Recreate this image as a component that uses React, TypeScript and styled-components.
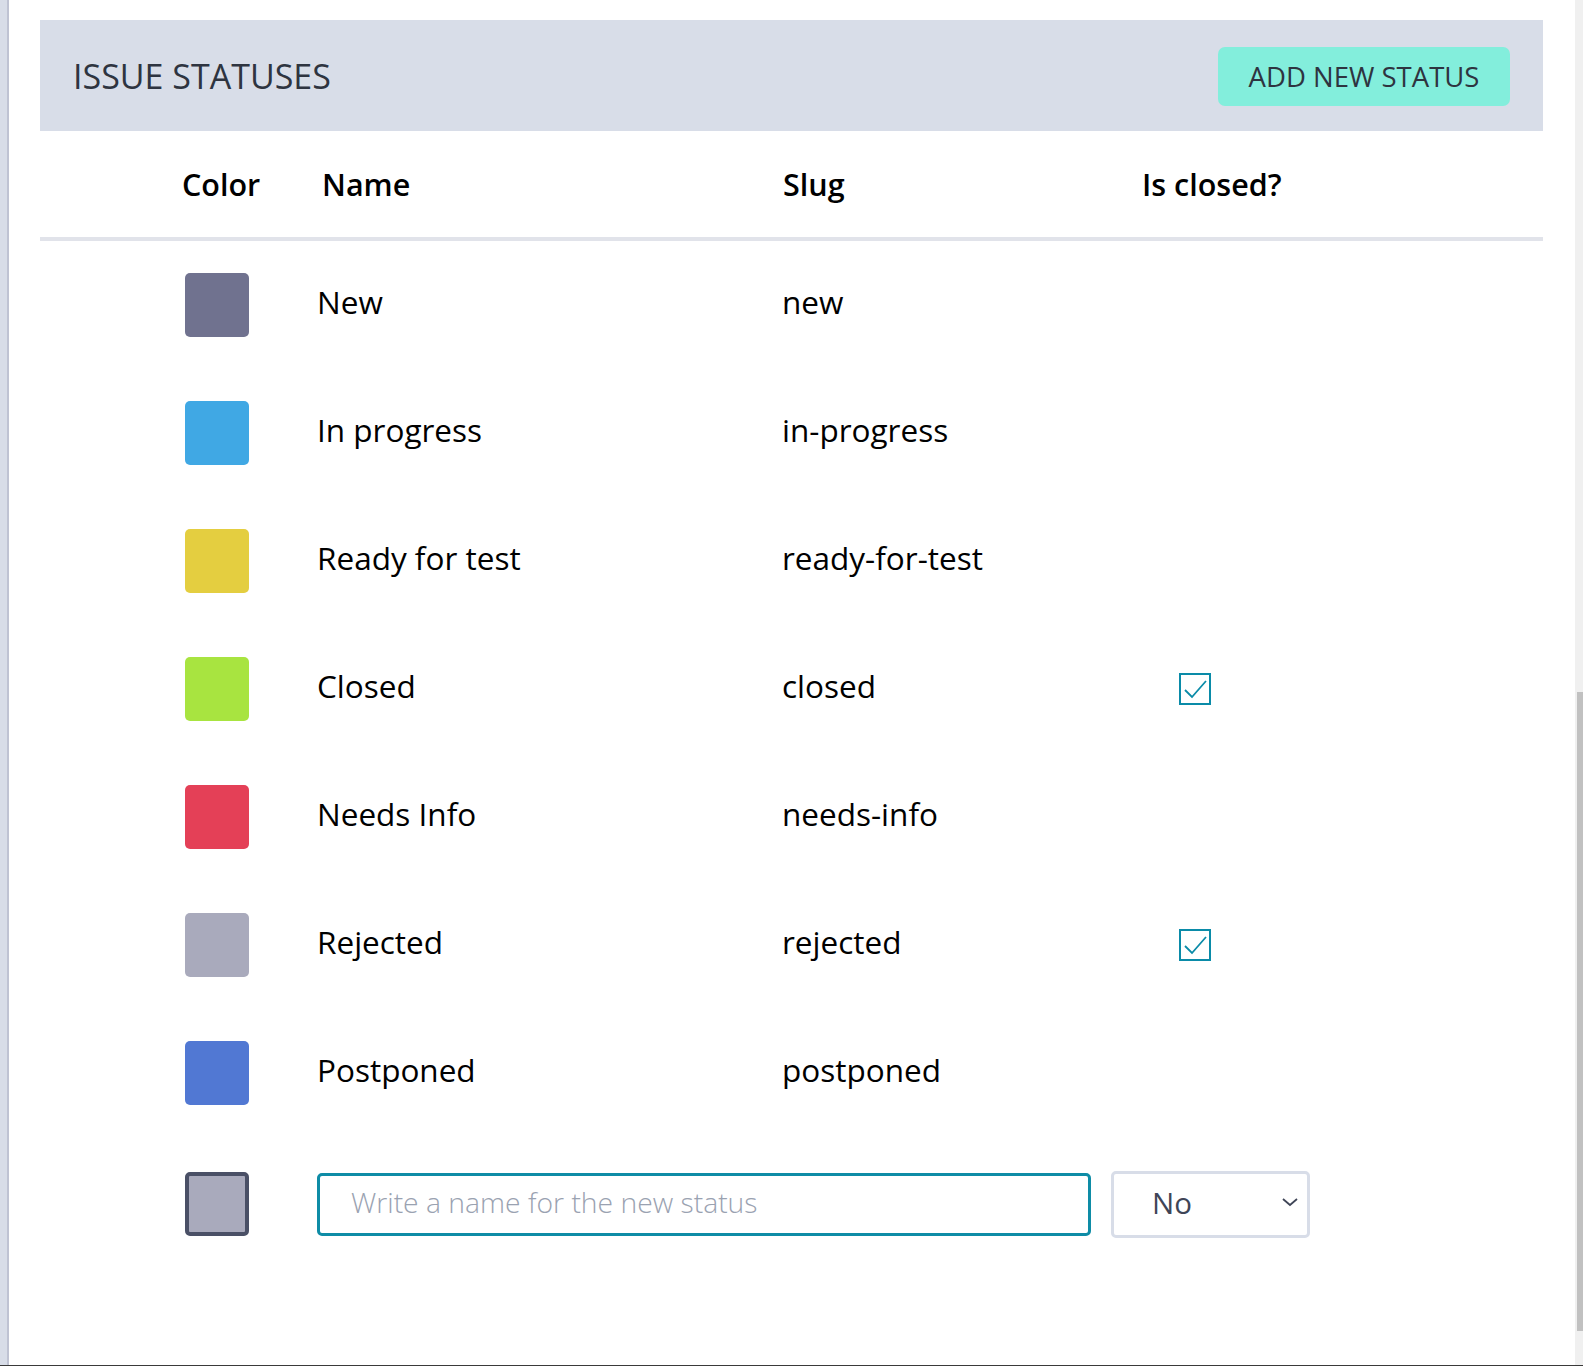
import React from "react";
import styled, { createGlobalStyle } from "styled-components";

const GlobalStyle = createGlobalStyle`
  html, body {
    margin: 0;
    padding: 0;
    background: #ffffff;
    overflow: hidden;
  }
  * { box-sizing: border-box; }
`;

const FONT = `"Open Sans", "Noto Sans", "DejaVu Sans", sans-serif`;

const Page = styled.div`
  display: flex;
  height: 1366px;
  border-bottom: 1px solid #3a3a3a;
  font-family: ${FONT};
  background: #ffffff;
`;

const LeftRail = styled.div`
  width: 9px;
  flex-shrink: 0;
  background: #d8dde8;
  border-right: 2px solid #bfc3d3;
`;

const Main = styled.main`
  flex: 1;
  padding: 20px 32px 0 31px;
  display: flex;
  flex-direction: column;
`;

const ScrollTrack = styled.div`
  width: 8px;
  flex-shrink: 0;
  background: #f0f0f0;
  padding: 692px 0 34px 2px;
  display: flex;
`;

const ScrollThumb = styled.div`
  flex: 1;
  background: #c1c1c1;
`;

const HeaderBand = styled.header`
  height: 111px;
  background: #d8dde8;
  display: flex;
  align-items: center;
  justify-content: space-between;
  padding: 0 33px 0 33px;
`;

const Title = styled.h1`
  margin: 0;
  font-size: 34px;
  font-weight: 400;
  color: #2e3440;
  letter-spacing: 0;
`;

const AddButton = styled.button`
  width: 292px;
  height: 59px;
  margin-top: 1px;
  border: none;
  border-radius: 7px;
  background: #83eedc;
  color: #2e3440;
  font-family: ${FONT};
  font-size: 27.5px;
  font-weight: 400;
  letter-spacing: 0;
  padding: 0;
  cursor: pointer;
`;

const Table = styled.div`
  display: flex;
  flex-direction: column;
`;

const GRID = `132px 465px 359px 1fr`;

const HeadRow = styled.div`
  display: grid;
  grid-template-columns: 140px 461px 359px 1fr;
  align-items: center;
  height: 110px;
  padding-left: 142px;
  border-bottom: 4px solid #e1e3ea;
`;

const HeadCell = styled.div`
  font-size: 30.5px;
  font-weight: 600;
  color: #000000;
  letter-spacing: 0;
`;

const Row = styled.div`
  display: grid;
  grid-template-columns: ${GRID};
  align-items: center;
  height: 128px;
  padding-left: 145px;
`;

const Swatch = styled.div<{ $color: string; $outlined?: boolean }>`
  width: 64px;
  height: 64px;
  border-radius: 5px;
  background: ${(p) => p.$color};
  border: ${(p) => (p.$outlined ? "4px solid #4a5066" : "none")};
`;

const Cell = styled.div`
  font-size: 31.5px;
  font-weight: 400;
  color: #000000;
  letter-spacing: 0;
  padding-bottom: 7px;
`;

const CheckCell = styled.div`
  padding-left: 38px;
  display: flex;
`;

const CheckBox = styled.div`
  width: 32px;
  height: 32px;
  border: 2px solid #0a8ba8;
  display: flex;
  align-items: center;
  justify-content: center;
`;

const FormRow = styled.div`
  display: flex;
  align-items: center;
  height: 132px;
  margin-top: 1px;
  padding-left: 145px;
`;

const NameInput = styled.input`
  margin-left: 68px;
  width: 774px;
  height: 63px;
  border: 3px solid #0e8ca6;
  border-radius: 5px;
  padding: 0 0 4px 31px;
  font-family: ${FONT};
  font-size: 28.3px;
  font-weight: 300;
  color: #2e3440;
  outline: none;
  caret-color: #3f4557;
  &::placeholder {
    color: #9aa2b1;
    opacity: 1;
  }
`;

const SelectBox = styled.div`
  margin-left: 20px;
  width: 199px;
  height: 67px;
  border: 3px solid #d8dde8;
  border-radius: 5px;
  display: flex;
  align-items: center;
  justify-content: space-between;
  padding: 0 8px 4px 38px;
  font-size: 29.5px;
  color: #3f4557;
`;

const Chevron = () => (
  <svg width="18" height="12" viewBox="0 0 18 12" aria-hidden>
    <path d="M2 3 L9 9 L16 3" fill="none" stroke="#3f4557" strokeWidth="1.8" />
  </svg>
);

const Check = () => (
  <svg width="26" height="26" viewBox="0 0 26 26" aria-hidden>
    <path d="M3 14 L10 21 L24 5" fill="none" stroke="#0a8ba8" strokeWidth="1.8" />
  </svg>
);

const statuses = [
  { color: "#70728f", name: "New", slug: "new", closed: false },
  { color: "#40a8e4", name: "In progress", slug: "in-progress", closed: false },
  { color: "#e4ce40", name: "Ready for test", slug: "ready-for-test", closed: false },
  { color: "#a8e440", name: "Closed", slug: "closed", closed: true },
  { color: "#e44057", name: "Needs Info", slug: "needs-info", closed: false },
  { color: "#a9aabc", name: "Rejected", slug: "rejected", closed: true },
  { color: "#5178d3", name: "Postponed", slug: "postponed", closed: false },
];

export default function App() {
  return (
    <>
      <GlobalStyle />
      <Page>
        <LeftRail />
        <Main>
          <HeaderBand>
            <Title>ISSUE STATUSES</Title>
            <AddButton>ADD NEW STATUS</AddButton>
          </HeaderBand>
          <Table>
            <HeadRow>
              <HeadCell>Color</HeadCell>
              <HeadCell>Name</HeadCell>
              <HeadCell>Slug</HeadCell>
              <HeadCell>Is closed?</HeadCell>
            </HeadRow>
            {statuses.map((s) => (
              <Row key={s.slug}>
                <Swatch $color={s.color} />
                <Cell>{s.name}</Cell>
                <Cell>{s.slug}</Cell>
                <CheckCell>
                  {s.closed && (
                    <CheckBox>
                      <Check />
                    </CheckBox>
                  )}
                </CheckCell>
              </Row>
            ))}
            <FormRow>
              <Swatch $color="#a9aabc" $outlined />
              <NameInput autoFocus placeholder="Write a name for the new status" />
              <SelectBox>
                <span>No</span>
                <Chevron />
              </SelectBox>
            </FormRow>
          </Table>
        </Main>
        <ScrollTrack>
          <ScrollThumb />
        </ScrollTrack>
      </Page>
    </>
  );
}
